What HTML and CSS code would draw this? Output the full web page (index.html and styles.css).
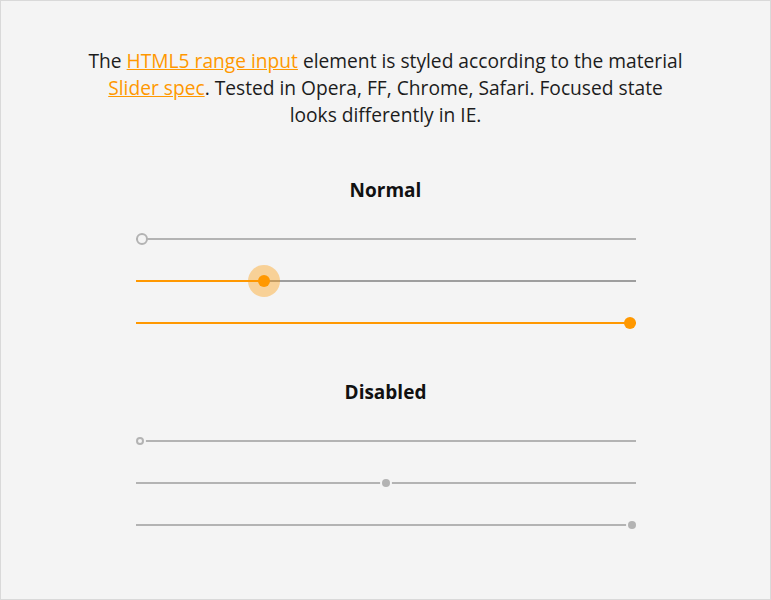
FILE: index.html
```html
<!DOCTYPE html>
<html>
<head>
<meta charset="utf-8">
<link rel="stylesheet" href="styles.css">
</head>
<body>
<div class="page">
  <p class="intro">The <a href="#">HTML5 range input</a> element is styled according to the material <a href="#">Slider spec</a>. Tested in Opera, FF, Chrome, Safari. Focused state looks differently in IE.</p>

  <section class="group">
    <h2 class="title">Normal</h2>
    <div class="row">
      <div class="track">
        <div class="thumb thumb-empty" style="left:0%"></div>
      </div>
    </div>
    <div class="row">
      <div class="track track-focus">
        <div class="fill" style="width:25.6%"></div>
        <div class="halo" style="left:25.6%"></div>
        <div class="thumb thumb-on" style="left:25.6%"></div>
      </div>
    </div>
    <div class="row">
      <div class="track">
        <div class="fill" style="width:100%"></div>
        <div class="thumb thumb-on thumb-end"></div>
      </div>
    </div>
  </section>

  <section class="group group-disabled">
    <h2 class="title">Disabled</h2>
    <div class="row">
      <div class="track">
        <div class="dthumb dthumb-empty"></div>
      </div>
    </div>
    <div class="row">
      <div class="track">
        <div class="dthumb dthumb-mid"></div>
      </div>
    </div>
    <div class="row">
      <div class="track">
        <div class="dthumb dthumb-end"></div>
      </div>
    </div>
  </section>
</div>
</body>
</html>
```

FILE: styles.css
```css
html, body {
  margin: 0;
  padding: 0;
}
body {
  font-family: "Open Sans", "Liberation Sans", sans-serif;
  color: #1c1c1c;
  background: #f4f4f4;
}
.page {
  box-sizing: border-box;
  width: 771px;
  height: 600px;
  border: 1px solid #d9d9d9;
  background: #f4f4f4;
  padding-top: 46px;
  display: flex;
  flex-direction: column;
  align-items: center;
}
.intro {
  width: 600px;
  margin: 0;
  font-size: 19.2px;
  line-height: 27px;
  text-align: center;
}
.intro a {
  color: #ff9800;
  text-decoration: underline;
}
.group {
  width: 500px;
  margin-top: 49px;
  display: flex;
  flex-direction: column;
}
.group-disabled {
  margin-top: 35px;
}
.title {
  margin: 0 0 14px;
  font-size: 19px;
  line-height: 27px;
  font-weight: 700;
  text-align: center;
  color: #111;
}
.row {
  height: 42px;
  display: flex;
  align-items: center;
}
.track {
  position: relative;
  width: 100%;
  height: 2px;
  background: #b3b3b3;
}
.track-focus {
  background: #9e9e9e;
}
.fill {
  position: absolute;
  left: 0;
  top: 0;
  height: 2px;
  background: #ff9800;
}
.thumb {
  position: absolute;
  top: 50%;
  width: 12px;
  height: 12px;
  box-sizing: border-box;
  border-radius: 50%;
  transform: translate(0, -50%);
}
.thumb-empty {
  background: #f4f4f4;
  border: 2px solid #b3b3b3;
}
.thumb-on {
  background: #ff9800;
  margin-left: -6px;
}
.thumb-end {
  left: auto;
  right: 0;
  margin-left: 0;
}
.halo {
  position: absolute;
  top: 50%;
  width: 32px;
  height: 32px;
  margin-left: -16px;
  border-radius: 50%;
  background: rgba(255, 152, 0, 0.38);
  transform: translateY(-50%);
}
.dthumb {
  position: absolute;
  top: 50%;
  width: 8px;
  height: 8px;
  box-sizing: border-box;
  border-radius: 50%;
  background: #b3b3b3;
  box-shadow: 0 0 0 2px #f4f4f4;
  transform: translateY(-50%);
}
.dthumb-empty {
  left: 0;
  background: #f4f4f4;
  border: 2px solid #b3b3b3;
}
.dthumb-mid {
  left: 50%;
  margin-left: -4px;
}
.dthumb-end {
  right: 0;
}
```
